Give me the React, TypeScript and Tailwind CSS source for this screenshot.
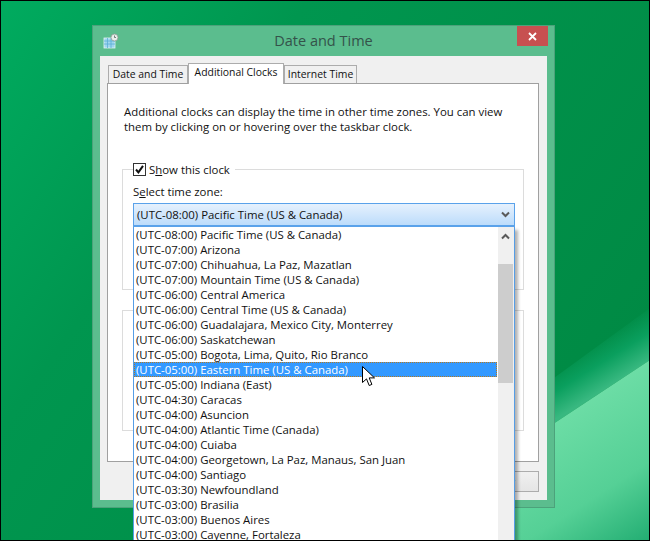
const zones = [
  "(UTC-08:00) Pacific Time (US & Canada)",
  "(UTC-07:00) Arizona",
  "(UTC-07:00) Chihuahua, La Paz, Mazatlan",
  "(UTC-07:00) Mountain Time (US & Canada)",
  "(UTC-06:00) Central America",
  "(UTC-06:00) Central Time (US & Canada)",
  "(UTC-06:00) Guadalajara, Mexico City, Monterrey",
  "(UTC-06:00) Saskatchewan",
  "(UTC-05:00) Bogota, Lima, Quito, Rio Branco",
  "(UTC-05:00) Eastern Time (US & Canada)",
  "(UTC-05:00) Indiana (East)",
  "(UTC-04:30) Caracas",
  "(UTC-04:00) Asuncion",
  "(UTC-04:00) Atlantic Time (Canada)",
  "(UTC-04:00) Cuiaba",
  "(UTC-04:00) Georgetown, La Paz, Manaus, San Juan",
  "(UTC-04:00) Santiago",
  "(UTC-03:30) Newfoundland",
  "(UTC-03:00) Brasilia",
  "(UTC-03:00) Buenos Aires",
  "(UTC-03:00) Cayenne, Fortaleza",
];

const Wallpaper = () => (
  <svg className="absolute inset-0" width="650" height="541" viewBox="0 0 650 541">
    <defs>
      <linearGradient id="base" x1="0" y1="0" x2="1" y2="0.6">
        <stop offset="0" stopColor="#00ab5f" />
        <stop offset="0.35" stopColor="#00964f" />
        <stop offset="1" stopColor="#008a44" />
      </linearGradient>
      <linearGradient id="light" gradientUnits="userSpaceOnUse" x1="560" y1="400" x2="650" y2="541">
        <stop offset="0" stopColor="#70dfa8" />
        <stop offset="0.6" stopColor="#55d096" />
        <stop offset="1" stopColor="#22ad72" />
      </linearGradient>
      <linearGradient id="band" gradientUnits="userSpaceOnUse" x1="585" y1="345" x2="610" y2="385">
        <stop offset="0" stopColor="#0a9f5e" stopOpacity="0" />
        <stop offset="0.5" stopColor="#0a9f5e" />
        <stop offset="1" stopColor="#38b880" />
      </linearGradient>
    </defs>
    <rect width="650" height="541" fill="url(#base)" />
    <polygon points="650,308 650,360 400,525 400,490" fill="url(#band)" />
    <polygon points="650,360 650,541 376,541" fill="url(#light)" />
  </svg>
);

const ControlIcon = () => (
  <svg width="16" height="16" viewBox="0 0 16 16">
    <rect x="1" y="5" width="11" height="10" fill="#9fd6ee" stroke="#e4f2f8" strokeWidth="0.8" />
    <path d="M1 8h11M1 11h11M4.5 5v10M8 5v10" stroke="#5cadd6" strokeWidth="0.8" />
    <circle cx="11.5" cy="4.5" r="3.5" fill="#e8f0ec" stroke="#8d9c96" strokeWidth="0.8" />
    <path d="M11.5 2.5v2h1.5" fill="none" stroke="#56645f" strokeWidth="0.8" />
  </svg>
);

const Chevron = ({ up }: { up?: boolean }) => (
  <svg width="9" height="7" viewBox="0 0 9 7" className={up ? "rotate-180" : ""}>
    <path d="M1 1.5l3.5 3.5L8 1.5" fill="none" stroke="#5a5a5a" strokeWidth="2" />
  </svg>
);

const Cursor = () => (
  <svg width="14" height="21" viewBox="0 0 14 21" className="absolute left-[362px] top-[366px]">
    <path d="M.5.5v16l4-3.6 2.7 6.6 2.7-1.1-2.7-6.5h5.3z" fill="#fff" stroke="#000" strokeWidth="1" />
  </svg>
);

function Tab({ label, active, w }: { label: string; active?: boolean; w: string }) {
  return (
    <div
      className={
        active
          ? `${w} h-[21px] -mb-px z-10 flex justify-center pt-[1px] text-[10.4px] whitespace-nowrap bg-white border border-b-0 border-[#acacac]`
          : `${w} h-[18px] flex justify-center pt-[1px] text-[10.4px] whitespace-nowrap bg-[#f0f0f0] border border-b-0 border-[#acacac]`
      }
    >
      {label}
    </div>
  );
}

export default function App() {
  return (
    <div className="relative w-[650px] h-[541px] overflow-hidden font-['Open_Sans',sans-serif] text-[11.4px] leading-[15px] text-[#111]">
      <Wallpaper />

      <div className="relative pl-[92px] pt-[25px]">
        {/* dialog */}
        <div className="w-[463px] h-[483px] flex flex-col border border-[#4ca27b] bg-[#5bbd8e] px-[7px] pb-[7px]">
          <div className="relative h-[30px] shrink-0 flex items-center justify-center">
            <div className="absolute left-[3px] top-[7px]">
              <ControlIcon />
            </div>
            <span className="text-[14.5px] text-[#34524a] pb-[2px]">Date and Time</span>
            <div className="absolute right-[-1px] top-0 w-[31px] h-[20px] bg-[#c75050] flex items-center justify-center">
              <svg width="9" height="9" viewBox="0 0 9 9">
                <path d="M1 1l7 7M8 1L1 8" stroke="#fff" strokeWidth="1.8" />
              </svg>
            </div>
          </div>

          <div className="flex-1 bg-[#f0f0f0] px-[7px] pt-[7px]">
            <div className="flex items-end pl-[1px] h-[20px]">
              <Tab label="Date and Time" w="w-[80px]" />
              <Tab label="Additional Clocks" w="w-[96px]" active />
              <Tab label="Internet Time" w="w-[73px]" />
            </div>

            <div className="w-[432px] h-[379px] border border-[#a0a0a0] bg-white px-[14px] pt-[20px]">
              <p className="ml-[2px] w-[400px]">
                Additional clocks can display the time in other time zones. You can view
                <br />
                them by clicking on or hovering over the taskbar clock.
              </p>

              <div className="relative mt-[35px] h-[121px] w-[402px] border border-[#dcdcdc] px-[10px]">
                <div className="absolute left-[10px] top-[-8px] bg-white pr-[5px] flex items-center gap-[3px]">
                  <div className="w-[13px] h-[13px] border border-[#333] bg-white flex items-center justify-center">
                    <svg width="11" height="11" viewBox="0 0 11 11">
                      <path d="M2 5.5l2.4 2.8L9 1.8" fill="none" stroke="#111" strokeWidth="2" />
                    </svg>
                  </div>
                  <span>
                    S<span className="underline">h</span>ow this clock
                  </span>
                </div>
                <div className="pt-[14px]">
                  S<span className="underline">e</span>lect time zone:
                </div>
                <div className="relative mt-[4px] w-[382px] h-[24px] border border-b-2 border-[#5aa2ea] bg-[linear-gradient(#e6f1fd,#bcdcfb)] flex items-center justify-between pl-[3px] pr-[4px]">
                  <span>(UTC-08:00) Pacific Time (US &amp; Canada)</span>
                  <Chevron />
                </div>
              </div>

              <div className="mt-[20px] h-[121px] w-[402px] border border-[#dcdcdc]" />
            </div>

            <div className="flex justify-end mt-[9px] pr-[1px]">
              <div className="w-[75px] h-[21px] border border-[#acacac] bg-[linear-gradient(#f0f0f0,#e5e5e5)] flex items-center justify-center pr-[3px]">
                Apply
              </div>
            </div>
          </div>
        </div>
      </div>

      {/* open dropdown */}
      <div className="absolute left-[133px] top-[227px] w-[382px] h-[320px] bg-white border border-t-0 border-[#569de5] shadow-[3px_3px_3px_rgba(0,0,0,0.3)]">
        <div className="flex h-full">
          <ul className="flex-1 pr-[1px]">
            {zones.map((z, i) =>
              i === 9 ? (
                <li key={z} className="h-[15px] pl-[1px] leading-[13px] bg-[#3399ff] text-white border border-dotted border-[#b5791f] whitespace-nowrap">
                  {z}
                </li>
              ) : (
                <li key={z} className="h-[15px] pl-[2px] whitespace-nowrap">
                  {z}
                </li>
              )
            )}
          </ul>
          <div className="w-[16px] bg-[#f0f0f0] flex flex-col">
            <div className="h-[37px] w-[15px] flex justify-center pt-[6px]">
              <Chevron up />
            </div>
            <div className="w-[15px] h-[119px] bg-[#cdcdcd]" />
          </div>
        </div>
      </div>

      <Cursor />
      <div className="absolute inset-0 border border-black pointer-events-none" />
    </div>
  );
}
